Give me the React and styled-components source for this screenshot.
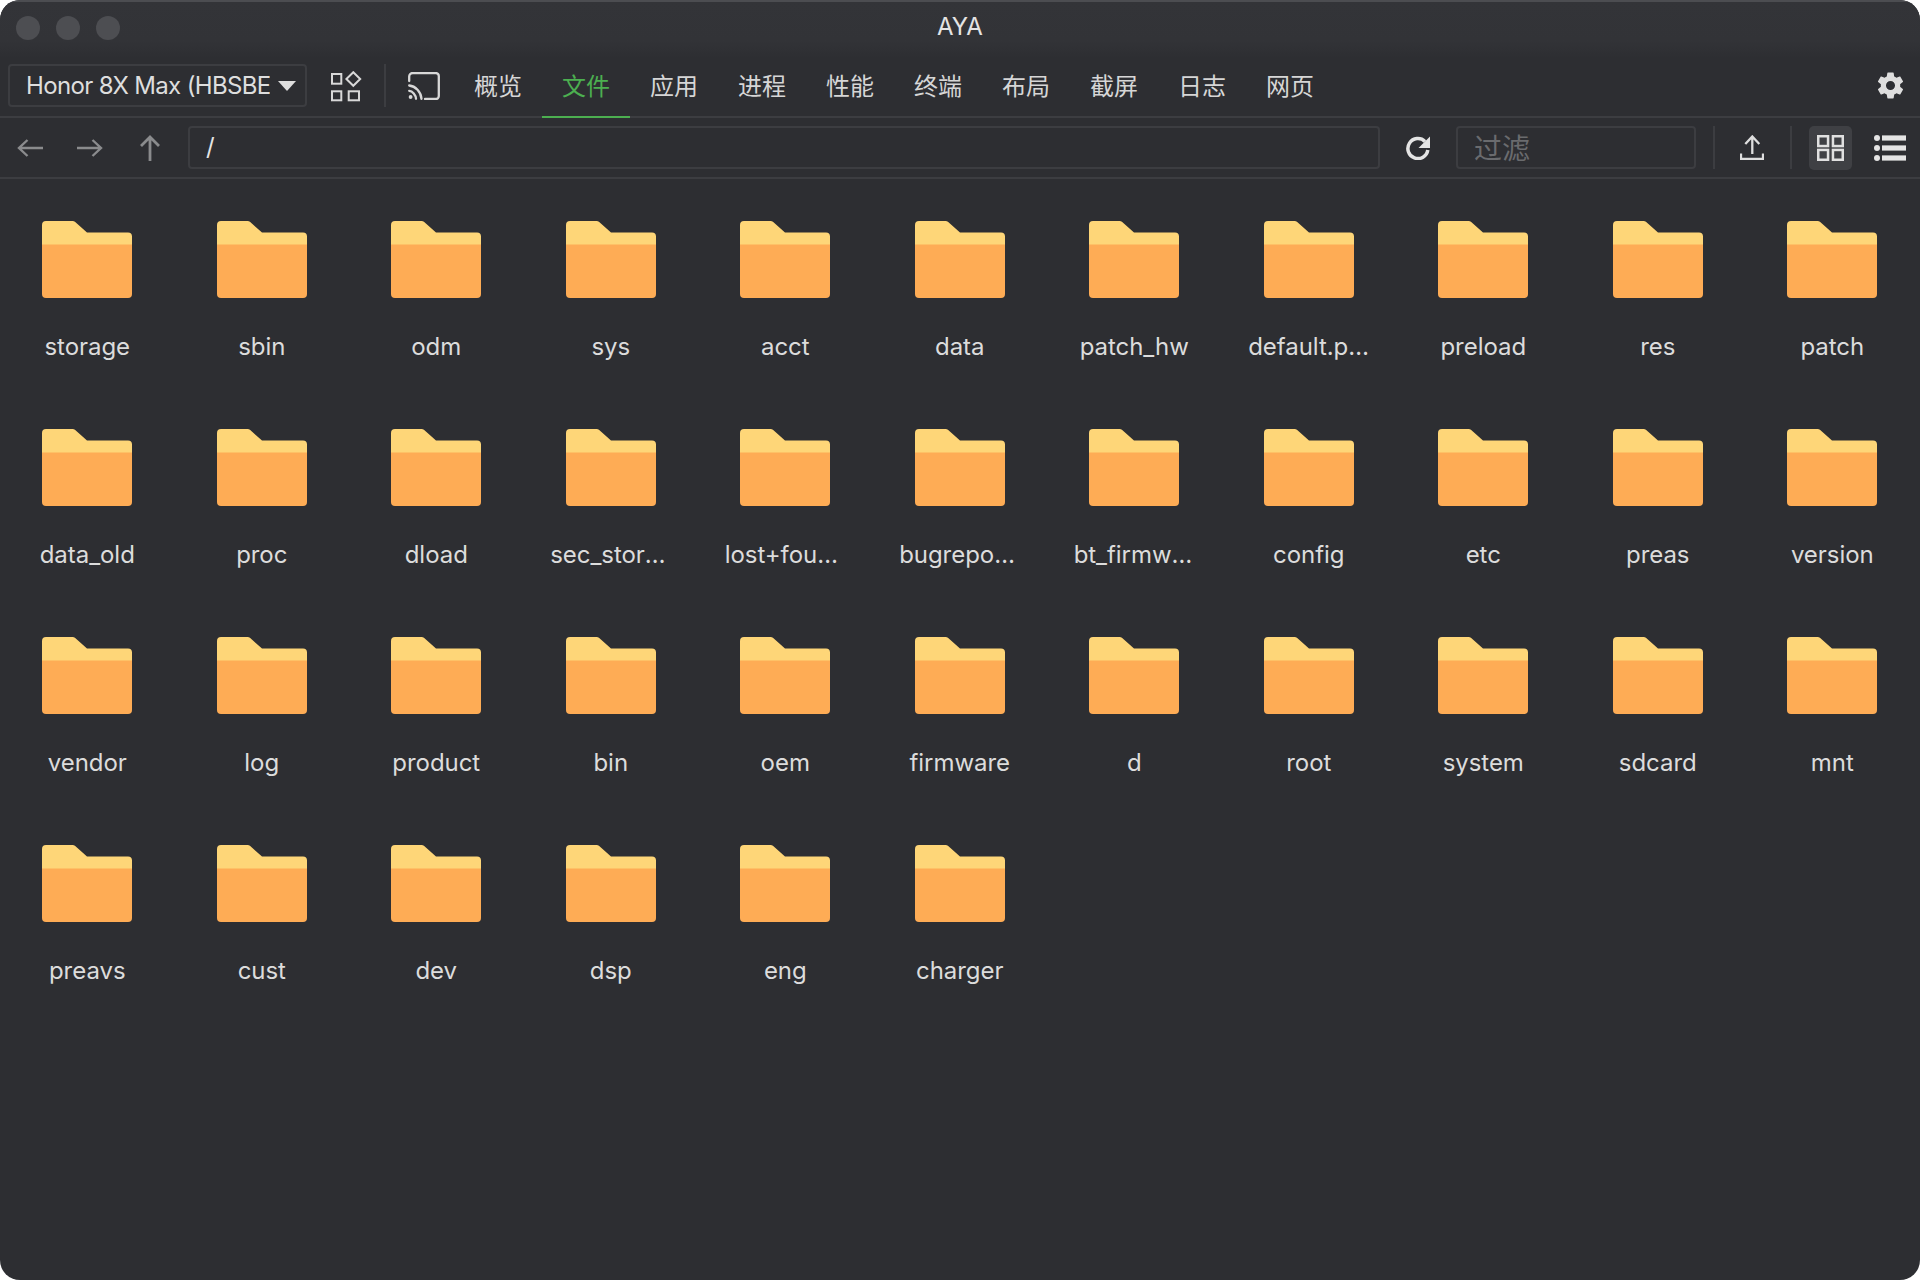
import React from 'react';
import styled, { createGlobalStyle } from 'styled-components';

const Global = createGlobalStyle`
  html, body { margin: 0; padding: 0; background: #fff; }
  * { box-sizing: border-box; }
  body { font-family: Inter, "Noto Sans CJK SC", sans-serif; }
`;

const Win = styled.div`
  width: 1920px; height: 1280px; background: #2d2e32; border-radius: 20px;
  overflow: hidden; display: flex; flex-direction: column; color: #dcdcdc;
`;
const TitleBar = styled.div`
  height: 58px; flex: none; display: flex; align-items: center; position: relative;
  padding: 0 16px; gap: 16px; border-top: 2px solid #4c4d51;
  background: linear-gradient(#333438, #323337 70%, #2d2e32);
`;
const Light = styled.span`
  width: 24px; height: 24px; border-radius: 50%; background: #4d4e52; margin-top: -4px;
`;
const Title = styled.div`
  position: absolute; left: 0; right: 0; top: 4px; text-align: center;
  font-size: 24px; line-height: 42px; color: #e4e4e4;
`;
const TabBar = styled.div`
  height: 60px; flex: none; display: flex; align-items: stretch; padding: 0 14px 0 8px;
  border-bottom: 2px solid #3c3d41;
`;
const TopGroup = styled.div`
  height: 55px; display: flex; align-items: center; flex: none;
`;
const Select = styled.div`
  width: 299px; height: 43px; flex: none; border: 2px solid #3c3d41; border-radius: 4px;
  display: flex; align-items: center; padding-left: 16px; position: relative;
`;
const SelectText = styled.div`
  width: 244px; overflow: hidden; white-space: nowrap; font-size: 24px; letter-spacing: -0.65px; color: #dedede;
`;
const Caret = styled.span`
  position: absolute; right: 9px; top: 15px; width: 0; height: 0;
  border-left: 9px solid transparent; border-right: 9px solid transparent; border-top: 10px solid #dedede;
`;
const AppsBox = styled.span`
  margin-left: 24px; display: flex; flex: none; margin-top: 1px;
`;
const Divider = styled.span`
  width: 2px; height: 43px; background: #3c3d41; flex: none; margin-left: ${p => p.$ml}px;
`;
const CastBox = styled.span`
  margin-left: 22px; margin-right: 14px; display: flex; flex: none;
`;
const Tab = styled.div`
  width: 88px; flex: none; display: flex; align-items: center; justify-content: center;
  font-size: 24px; font-family: "Noto Sans CJK SC", sans-serif; position: relative; padding-bottom: 5px;
  color: ${p => p.$active ? '#4caf50' : '#d6d6d6'};
  ${p => p.$active && `&::after { content: ''; position: absolute; left: 0; right: 0; bottom: -2px; height: 2px; background: #4caf50; }`}
`;
const Spacer = styled.span`flex: 1;`;
const PathBar = styled.div`
  height: 61px; flex: none; display: flex; align-items: center; padding: 0 14px 0 17px;
  border-bottom: 2px solid #3c3d41;
`;
const NavIcon = styled.span`
  display: flex; flex: none; margin-left: ${p => p.$ml || 0}px;
`;
const Field = styled.div`
  height: 43px; flex: none; width: ${p => p.$w}px; margin-left: ${p => p.$ml}px;
  border: 2px solid #3c3d41; border-radius: 4px; display: flex; align-items: center; padding: 0 0 2px ${p => p.$pl}px;
  font-size: ${p => p.$fs}px; color: ${p => p.$c};
  font-family: Inter, "Noto Sans CJK SC", sans-serif;
`;
const ViewBtn = styled.span`
  width: 43px; height: 44px; margin-left: ${p => p.$ml}px; flex: none; border-radius: 5px; display: flex;
  align-items: center; justify-content: center; background: #3f4044;
`;
const Grid = styled.div`
  display: grid; grid-template-columns: repeat(11, 1fr); grid-auto-rows: 208px; padding: 41px 0.5px 0 0;
`;
const Item = styled.div`
  display: flex; flex-direction: column; align-items: center; padding-top: 1px;
`;
const FolderIcon = styled.svg`
  width: 90px; height: 77px; display: block; flex: none;
`;
const Label = styled.div`
  width: 121.2px; margin-top: 34px; font-size: 24px; line-height: 30px; text-align: center; color: #dcdcdc;
  letter-spacing: -0.05px; white-space: nowrap; overflow: hidden; text-overflow: ellipsis;
`;

const Folder = () => (
  <FolderIcon viewBox="0 0 90 77">
    <path d="M0 4a4 4 0 0 1 4-4h26.5a4 4 0 0 1 2.7 1L45 11.5h41a4 4 0 0 1 4 4V24H0z" fill="#fed678" />
    <path d="M0 23.500h90V73a4 4 0 0 1-4 4H4a4 4 0 0 1-4-4z" fill="#feac55" />
  </FolderIcon>
);

const AppsIcon = () => (
  <svg width="31" height="31" viewBox="0 0 31 31" fill="none" stroke="#d8d8d8" strokeWidth="2">
    <rect x="1" y="3" width="9.300" height="9.700" />
    <path d="M22.300 1.200l6.900 6.800-6.900 6.800-6.900-6.800z" />
    <rect x="1" y="20.300" width="9.300" height="9" />
    <rect x="17.700" y="20.300" width="10.300" height="9" />
  </svg>
);
const CastIcon = () => (
  <svg width="32" height="28" viewBox="0 0 32 28" fill="none" stroke="#d8d8d8" strokeWidth="2.300" strokeLinecap="round">
    <path d="M1.200 9V4.500A3.500 3.500 0 0 1 4.700 1H27.800a3 3 0 0 1 3 3V24a3 3 0 0 1-3 3H17" />
    <path d="M1.200 13.500C7.500 14 13 20 13.500 26.800" />
    <path d="M1.200 18.800C4.500 19 7.800 23 8 26.800" />
    <circle cx="2.600" cy="25" r="1.900" fill="#d8d8d8" stroke="none" />
  </svg>
);
const GearIcon = () => (
  <svg width="31" height="31" viewBox="0 0 24 24" fill="#dedede">
    <path d="M19.430 12.980c.04-.32.07-.64.07-.98s-.03-.66-.07-.98l2.110-1.650c.19-.15.24-.42.12-.64l-2-3.460c-.12-.22-.39-.3-.61-.22l-2.490 1c-.52-.4-1.080-.73-1.690-.98l-.38-2.650A.488.488 0 0 0 14 2h-4c-.25 0-.46.18-.49.420l-.38 2.650c-.610.25-1.170.590-1.690.98l-2.490-1c-.23-.090-.49 0-.61.220l-2 3.460c-.130.220-.070.490.120.640l2.110 1.650c-.040.320-.070.650-.070.980s.030.660.070.980l-2.110 1.650c-.190.150-.240.420-.120.640l2 3.460c.120.220.390.300.610.220l2.490-1c.520.400 1.080.730 1.690.980l.380 2.650c.030.240.240.420.490.420h4c.250 0 .460-.180.490-.420l.380-2.650c.610-.250 1.170-.590 1.690-.980l2.490 1c.230.090.490 0 .610-.220l2-3.460c.120-.220.070-.490-.120-.640l-2.110-1.650zM12 15.500a3.500 3.500 0 1 1 0-7 3.500 3.500 0 0 1 0 7z" />
  </svg>
);
const ArrowIcon = ({ d, w, h, sw = 2.4 }) => (
  <svg width={w} height={h} viewBox={`0 0 ${w} ${h}`} fill="none" stroke="#8a8b8d" strokeWidth={sw}>
    <path d={d} />
  </svg>
);
const RefreshIcon = () => (
  <svg width="24" height="24" viewBox="0 0 24 24" fill="none">
    <path d="M19 5.500A10 10 0 1 0 21.800 14" stroke="#e4e4e4" strokeWidth="3.500" />
    <path d="M24 0.500V12H12.500z" fill="#e4e4e4" />
  </svg>
);
const UploadIcon = () => (
  <svg width="24" height="25" viewBox="0 0 24 25" fill="none" stroke="#dedede" strokeWidth="2.300">
    <path d="M12.300 19V1.500M5.300 9L12.300 1.500 19.300 9M1 18.500v5.400h22v-5.400" />
  </svg>
);
const GridIcon = () => (
  <svg width="27" height="26" viewBox="0 0 27 26" fill="none" stroke="#e0e0e0" strokeWidth="2.500">
    <rect x="1.250" y="1.250" width="9.800" height="9.800" />
    <rect x="15.950" y="1.250" width="9.800" height="9.800" />
    <rect x="1.250" y="14.950" width="9.800" height="9.800" />
    <rect x="15.950" y="14.950" width="9.800" height="9.800" />
  </svg>
);
const ListIcon = () => (
  <svg width="32" height="26" viewBox="0 0 32 26" fill="#e4e4e4">
    <circle cx="3" cy="3" r="3" /><circle cx="3" cy="13" r="3" /><circle cx="3" cy="23" r="3" />
    <rect x="8" y="0.400" width="24" height="5.200" /><rect x="8" y="10.400" width="24" height="5.200" /><rect x="8" y="20.400" width="24" height="5.200" />
  </svg>
);

const tabs = ['概览', '文件', '应用', '进程', '性能', '终端', '布局', '截屏', '日志', '网页'];
const folders = [
  'storage','sbin','odm','sys','acct','data','patch_hw','default.prop.d','preload','res','patch',
  'data_old','proc','dload','sec_storage','lost+found','bugreports','bt_firmware','config','etc','preas','version',
  'vendor','log','product','bin','oem','firmware','d','root','system','sdcard','mnt',
  'preavs','cust','dev','dsp','eng','charger'
];

export default function App() {
  return (
    <Win>
      <Global />
      <TitleBar>
        <Light /><Light /><Light />
        <Title>AYA</Title>
      </TitleBar>
      <TabBar>
        <TopGroup>
          <Select>
            <SelectText>Honor 8X Max (HBSBE-AL00)</SelectText>
            <Caret />
          </Select>
          <AppsBox><AppsIcon /></AppsBox>
          <Divider $ml={22} />
          <CastBox><CastIcon /></CastBox>
        </TopGroup>
        {tabs.map((t, i) => <Tab key={t} $active={i === 1}>{t}</Tab>)}
        <Spacer />
        <TopGroup><GearIcon /></TopGroup>
      </TabBar>
      <PathBar>
        <NavIcon><ArrowIcon w={26} h={18} d="M26 9H2M10.500 1L2 9l8.500 8" /></NavIcon>
        <NavIcon $ml={34}><ArrowIcon w={26} h={18} d="M0 9h24M15.500 1L24 9l-8.500 8" /></NavIcon>
        <NavIcon $ml={37}><ArrowIcon w={20} h={26} sw={2.800} d="M10 26V2M1 11l9-9 9 9" /></NavIcon>
        <Field $w={1192} $ml={28} $pl={16} $fs={24} $c="#e4e4e4">/</Field>
        <NavIcon $ml={26}><RefreshIcon /></NavIcon>
        <Field $w={240} $ml={26} $pl={16} $fs={28} $c="#6a6b6e">过滤</Field>
        <Divider $ml={16.500} />
        <NavIcon $ml={25.500}><UploadIcon /></NavIcon>
        <Divider $ml={26} />
        <ViewBtn $ml={16.500}><GridIcon /></ViewBtn>
        <NavIcon $ml={22.500}><ListIcon /></NavIcon>
      </PathBar>
      <Grid>
        {folders.map(f => (
          <Item key={f}>
            <Folder />
            <Label>{f}</Label>
          </Item>
        ))}
      </Grid>
    </Win>
  );
}
